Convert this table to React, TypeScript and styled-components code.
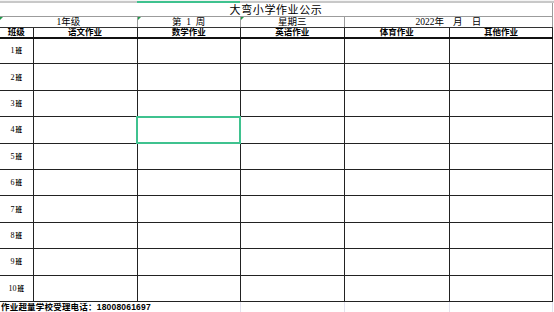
import styled, { createGlobalStyle } from "styled-components";

const GlobalStyle = createGlobalStyle`
  html, body {
    margin: 0;
    padding: 0;
    background: #ffffff;
  }
  body {
    font-family: "Liberation Serif", "Noto Sans CJK SC", serif;
    color: #000;
  }
`;

const widths = [33, 104, 103, 104, 105, 103];
const subjects = ["语文作业", "数学作业", "英语作业", "体育作业", "其他作业"];
const classes = Array.from({ length: 10 }, (_, i) => `${i + 1}`);

function App() {
  return (
    <Sheet>
      <GlobalStyle />
      <ColumnStrip>
        <StripPart style={{ width: 137 }} />
        <StripPart $active style={{ width: 103 }} />
        <StripPart style={{ flex: 1 }} />
      </ColumnStrip>
      <Table>
        <colgroup>
          {widths.map((w, i) => (
            <col key={i} style={{ width: w }} />
          ))}
        </colgroup>
        <tbody>
          <TitleRow>
            <TitleCell colSpan={6}>大弯小学作业公示</TitleCell>
          </TitleRow>
          <InfoRow>
            <InfoCell colSpan={2} $flag>
              1年级
            </InfoCell>
            <InfoCell $flag>第&nbsp;&nbsp;1&nbsp;&nbsp;周</InfoCell>
            <InfoCell $flag>星期三</InfoCell>
            <InfoCell colSpan={2}>
              <DateText>2022年</DateText>
              <DateText>月</DateText>
              <DateText>日</DateText>
            </InfoCell>
          </InfoRow>
          <HeadRow>
            <HeadCell>班级</HeadCell>
            {subjects.map((s) => (
              <HeadCell key={s}>{s}</HeadCell>
            ))}
          </HeadRow>
          {classes.map((n, r) => (
            <DataRow key={n}>
              <ClassCell>
                {n}
                <Ban>班</Ban>
              </ClassCell>
              {subjects.map((s, c) => (
                <Cell key={s} $selected={r === 3 && c === 1} />
              ))}
            </DataRow>
          ))}
          <FooterRow>
            <FooterCell colSpan={3}>
              <FooterText>作业超量学校受理电话：18008061697</FooterText>
            </FooterCell>
            <GridCell />
            <GridCell />
            <GridCell />
          </FooterRow>
        </tbody>
      </Table>
    </Sheet>
  );
}

const Sheet = styled.div`
  width: 554px;
  height: 312px;
  overflow: hidden;
  background: #fff;
  display: flex;
  flex-direction: column;
`;

const ColumnStrip = styled.div`
  display: flex;
  height: 3px;
  flex-shrink: 0;
  box-sizing: border-box;
  border-top: 1px solid #f4f4f4;
`;

const StripPart = styled.div<{ $active?: boolean }>`
  height: 2px;
  background: ${(p) => (p.$active ? "#3fc28f" : "#c8c8c8")};
`;

const Table = styled.table`
  border-collapse: collapse;
  table-layout: fixed;
  width: 553px;
  font-size: 8px;
  line-height: 9px;
  td {
    padding: 0;
    box-sizing: border-box;
  }
`;

const TitleRow = styled.tr`
  height: 13px;
`;

const TitleCell = styled.td`
  text-align: center;
  font-size: 11px;
  line-height: 12px;
  letter-spacing: 0.6px;
  border-bottom: 1px solid #9c9c9c;
  border-right: 1px solid #9c9c9c;
  vertical-align: bottom;
`;

const InfoRow = styled.tr`
  height: 11px;
`;

const InfoCell = styled.td<{ $flag?: boolean }>`
  position: relative;
  text-align: center;
  font-size: 9.5px;
  line-height: 10px;
  border-right: 1px solid #9c9c9c;
  border-bottom: 1px solid #333;
  white-space: nowrap;
  &::before {
    content: "";
    display: ${(p) => (p.$flag ? "block" : "none")};
    position: absolute;
    left: 0;
    top: 0;
    width: 0;
    height: 0;
    border-top: 3px solid #1f9a4a;
    border-right: 3px solid transparent;
  }
`;

const DateText = styled.span`
  margin-left: 9px;
  &:first-child {
    margin-left: 0;
  }
`;

const HeadRow = styled.tr`
  height: 10px;
`;

const HeadCell = styled.td`
  text-align: center;
  font-family: "Liberation Sans", "Noto Sans CJK SC", sans-serif;
  font-weight: bold;
  font-size: 8.5px;
  line-height: 9px;
  white-space: nowrap;
  border-right: 1px solid #222;
  border-bottom: 2px solid #111;
`;

const DataRow = styled.tr`
  height: 26.4px;
`;

const ClassCell = styled.td`
  text-align: center;
  font-size: 8px;
  border-right: 1px solid #222;
  border-bottom: 1px solid #222;
  white-space: nowrap;
`;

const Ban = styled.span`
  font-family: "Noto Sans CJK SC", sans-serif;
  font-weight: bold;
  font-size: 6.5px;
  margin-left: 1px;
`;

const Cell = styled.td<{ $selected?: boolean }>`
  border-right: 1px solid #222;
  border-bottom: 1px solid #222;
  outline: ${(p) => (p.$selected ? "2px solid #3fc28f" : "none")};
  outline-offset: -1px;
`;

const FooterRow = styled.tr`
  height: 10px;
`;

const FooterCell = styled.td`
  white-space: nowrap;
  overflow: visible;
  vertical-align: top;
  line-height: 9px;
  padding-top: 1px !important;
`;

const FooterText = styled.span`
  font-family: "Liberation Sans", "Noto Sans CJK SC", sans-serif;
  font-weight: bold;
  font-size: 8.5px;
  line-height: 9px;
  padding-left: 1px;
  letter-spacing: 0.2px;
`;

const GridCell = styled.td`
  border-left: 1px solid #e2e2ee;
  border-right: 1px solid #e2e2ee;
`;

export default App;
